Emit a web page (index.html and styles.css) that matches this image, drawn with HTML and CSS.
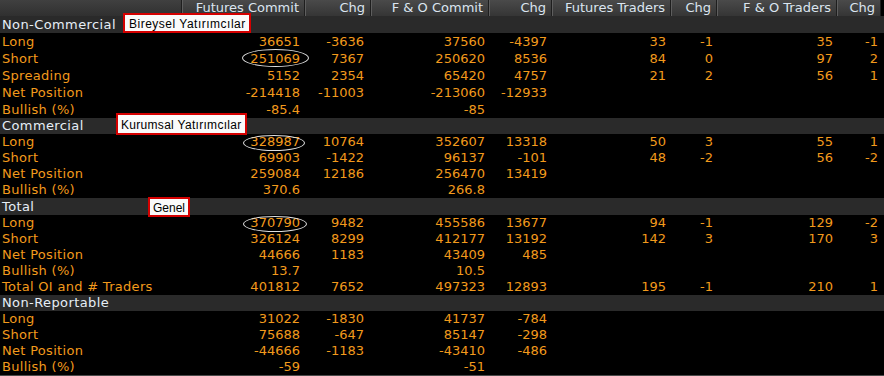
FILE: index.html
```html
<!DOCTYPE html>
<html>
<head>
<meta charset="utf-8">
<link rel="stylesheet" href="styles.css">
</head>
<body>
<div class="screen">
  <div class="row head">
    <div class="hc"></div>
    <div class="hc">Futures Commit</div>
    <div class="hc">Chg</div>
    <div class="hc">F &amp; O Commit</div>
    <div class="hc">Chg</div>
    <div class="hc">Futures Traders</div>
    <div class="hc">Chg</div>
    <div class="hc">F &amp; O Traders</div>
    <div class="hc">Chg</div>
  </div>

  <div class="section tall">Non-Commercial</div>
  <div class="row data tall"><div class="lb">Long</div><div>36651</div><div>-3636</div><div>37560</div><div>-4397</div><div>33</div><div>-1</div><div>35</div><div>-1</div></div>
  <div class="row data tall"><div class="lb">Short</div><div>251069</div><div>7367</div><div>250620</div><div>8536</div><div>84</div><div>0</div><div>97</div><div>2</div></div>
  <div class="row data tall"><div class="lb">Spreading</div><div>5152</div><div>2354</div><div>65420</div><div>4757</div><div>21</div><div>2</div><div>56</div><div>1</div></div>
  <div class="row data tall"><div class="lb">Net Position</div><div>-214418</div><div>-11003</div><div>-213060</div><div>-12933</div><div></div><div></div><div></div><div></div></div>
  <div class="row data tall"><div class="lb">Bullish (%)</div><div>-85.4</div><div></div><div>-85</div><div></div><div></div><div></div><div></div><div></div></div>

  <div class="section">Commercial</div>
  <div class="row data"><div class="lb">Long</div><div>328987</div><div>10764</div><div>352607</div><div>13318</div><div>50</div><div>3</div><div>55</div><div>1</div></div>
  <div class="row data"><div class="lb">Short</div><div>69903</div><div>-1422</div><div>96137</div><div>-101</div><div>48</div><div>-2</div><div>56</div><div>-2</div></div>
  <div class="row data"><div class="lb">Net Position</div><div>259084</div><div>12186</div><div>256470</div><div>13419</div><div></div><div></div><div></div><div></div></div>
  <div class="row data"><div class="lb">Bullish (%)</div><div>370.6</div><div></div><div>266.8</div><div></div><div></div><div></div><div></div><div></div></div>

  <div class="section tall">Total</div>
  <div class="row data"><div class="lb">Long</div><div>370790</div><div>9482</div><div>455586</div><div>13677</div><div>94</div><div>-1</div><div>129</div><div>-2</div></div>
  <div class="row data"><div class="lb">Short</div><div>326124</div><div>8299</div><div>412177</div><div>13192</div><div>142</div><div>3</div><div>170</div><div>3</div></div>
  <div class="row data"><div class="lb">Net Position</div><div>44666</div><div>1183</div><div>43409</div><div>485</div><div></div><div></div><div></div><div></div></div>
  <div class="row data"><div class="lb">Bullish (%)</div><div>13.7</div><div></div><div>10.5</div><div></div><div></div><div></div><div></div><div></div></div>
  <div class="row data"><div class="lb">Total OI and # Traders</div><div>401812</div><div>7652</div><div>497323</div><div>12893</div><div>195</div><div>-1</div><div>210</div><div>1</div></div>

  <div class="section">Non-Reportable</div>
  <div class="row data"><div class="lb">Long</div><div>31022</div><div>-1830</div><div>41737</div><div>-784</div><div></div><div></div><div></div><div></div></div>
  <div class="row data"><div class="lb">Short</div><div>75688</div><div>-647</div><div>85147</div><div>-298</div><div></div><div></div><div></div><div></div></div>
  <div class="row data"><div class="lb">Net Position</div><div>-44666</div><div>-1183</div><div>-43410</div><div>-486</div><div></div><div></div><div></div><div></div></div>
  <div class="row data"><div class="lb">Bullish (%)</div><div>-59</div><div></div><div>-51</div><div></div><div></div><div></div><div></div><div></div></div>

  <div class="note note1">Bireysel Yatırımcılar</div>
  <div class="note note2">Kurumsal Yatırımcılar</div>
  <div class="note note3">Genel</div>

  <div class="ring ring1"></div>
  <div class="ring ring2"></div>
  <div class="ring ring3"></div>
</div>
</body>
</html>
```
FILE: styles.css
```css
html, body {
  margin: 0;
  padding: 0;
  background: #000;
}

.screen {
  position: relative;
  width: 884px;
  height: 376px;
  overflow: hidden;
  background: #000;
  font-family: "DejaVu Sans", "Liberation Sans", sans-serif;
  font-size: 13px;
  border-bottom: 1px solid #4a4a4a;
  box-sizing: border-box;
}

.row {
  display: grid;
  grid-template-columns: 182px 123px 66px 118px 63px 119px 46px 120px 44px 3px;
  height: 16px;
  line-height: 16px;
  white-space: nowrap;
}

.row.tall {
  height: 17px;
  line-height: 17px;
}

.head .hc {
  background: linear-gradient(#4a4a4a, #353535);
  border-left: 1px solid #5e5e5e;
  border-right: 1px solid #1e1e1e;
  color: #dbe5f0;
  text-align: right;
  padding-right: 5px;
  box-sizing: border-box;
}

.head .hc:first-child {
  border-left: none;
  background: linear-gradient(#404040, #303030);
}

.section {
  height: 16px;
  line-height: 16px;
  background: #2a2a2a;
  color: #e6eef6;
  padding-left: 2px;
  letter-spacing: 0.4px;
}

.section.tall {
  height: 17px;
  line-height: 17px;
}

.data {
  color: #f29a1c;
}

.data > div {
  text-align: right;
  padding-right: 5px;
}

.data > .lb {
  text-align: left;
  padding-left: 2px;
  padding-right: 0;
  letter-spacing: 0.3px;
}

.data > div:nth-child(3) { padding-right: 7px; }
.data > div:nth-child(4) { padding-right: 4px; }
.data > div:nth-child(5) { padding-right: 5px; }
.data > div:nth-child(7) { padding-right: 4px; }
.data > div:nth-child(8) { padding-right: 4px; }
.data > div:nth-child(9) { padding-right: 3px; }

.note {
  position: absolute;
  background: #fafafa;
  border: 2px solid #d40000;
  color: #000;
  font-family: "Liberation Sans", Arial, sans-serif;
  font-size: 12px;
  line-height: 16px;
  padding: 0 0 0 4px;
  white-space: nowrap;
  box-sizing: border-box;
}

.note1 { left: 123px; top: 13px; width: 128px; height: 20px; padding-top: 1px; letter-spacing: 0.5px; }
.note2 { left: 116px; top: 113px; width: 131px; height: 22px; padding-top: 2px; padding-left: 3px; letter-spacing: 0.3px; }
.note3 { left: 148px; top: 197px; width: 42px; height: 20px; padding-top: 1px; padding-left: 3px; }

.ring {
  position: absolute;
  border: 1px solid #e0e0e0;
  border-radius: 50%;
  box-sizing: border-box;
}

.ring1 { left: 242px; top: 49px; width: 67px; height: 18px; }
.ring2 { left: 243px; top: 135px; width: 62px; height: 16px; }
.ring3 { left: 243px; top: 216px; width: 64px; height: 16px; }
```
